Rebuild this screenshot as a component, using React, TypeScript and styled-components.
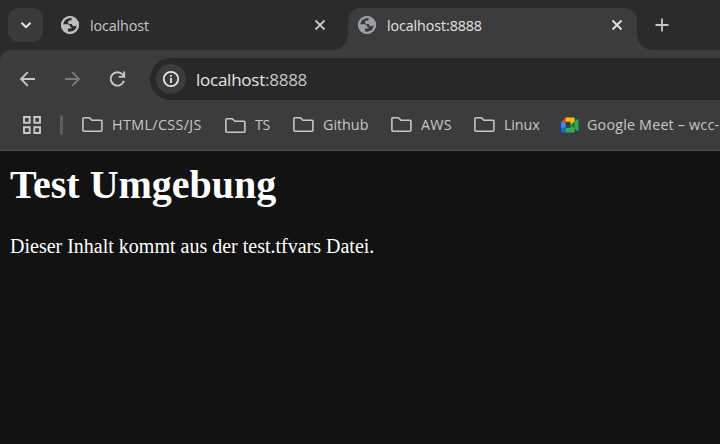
import React from "react";
import styled, { createGlobalStyle } from "styled-components";

const Global = createGlobalStyle`
  *, *::before, *::after { box-sizing: border-box; }
  html, body, #root { margin: 0; height: 100%; overflow: hidden; background: #121212; }
  svg { display: block; flex: none; }
`;

const Browser = styled.div`
  width: 720px;
  height: 444px;
  display: flex;
  flex-direction: column;
  overflow: hidden;
  background: #2b2b2b;
  font-family: "Open Sans", "Noto Sans", sans-serif;
`;

const TabStrip = styled.div`
  height: 50px;
  flex: none;
  display: flex;
  padding: 8px 0 0 8px;
`;

const TabSearch = styled.div`
  width: 35px;
  height: 34px;
  flex: none;
  border-radius: 11px;
  background: #3b3b3b;
  display: grid;
  place-items: center;
`;

const Tab = styled.div<{ $active?: boolean }>`
  position: relative;
  width: ${(p) => (p.$active ? 289 : 305)}px;
  height: 42px;
  flex: none;
  display: flex;
  align-items: center;
  padding: 0 ${(p) => (p.$active ? "7px 8px 10px" : "15px 8px 18px")};
  border-radius: 13px 13px 0 0;
  background: ${(p) => (p.$active ? "#3c3c3c" : "transparent")};
  color: ${(p) => (p.$active ? "#e3e3e3" : "#c7c7c7")};

  &::before, &::after {
    content: "";
    display: ${(p) => (p.$active ? "block" : "none")};
    position: absolute;
    bottom: 0;
    width: 15px;
    height: 15px;
  }
  &::before {
    left: -15px;
    background: radial-gradient(circle at 0 0, transparent 14.5px, #3c3c3c 15px);
  }
  &::after {
    right: -15px;
    background: radial-gradient(circle at 100% 0, transparent 14.5px, #3c3c3c 15px);
  }
`;

const TabTitle = styled.span`
  flex: 1;
  margin-left: 11px;
  padding-top: 2px;
  font-size: 14.3px;
  line-height: 20px;
  letter-spacing: -0.1px;
  white-space: nowrap;
`;

const NewTab = styled.div`
  margin: 10px 0 0 18px;
`;

const Toolbar = styled.div`
  height: 57px;
  flex: none;
  display: flex;
  align-items: center;
  padding-left: 17px;
  border-radius: 10px 0 0 0;
  background: #3c3c3c;
`;

const NavButton = styled.div<{ $dim?: boolean }>`
  width: 45px;
  color: ${(p) => (p.$dim ? "#7b7b7b" : "#c7c7c7")};
`;

const AddressBar = styled.div`
  flex: 1;
  height: 42px;
  margin-left: -2px;
  display: flex;
  align-items: center;
  padding-left: 6px;
  border-radius: 21px 0 0 21px;
  background: #282828;
  color: #e6e6e6;
`;

const SiteInfo = styled.div`
  width: 30px;
  height: 30px;
  border-radius: 50%;
  background: #3c3c3c;
  display: grid;
  place-items: center;
`;

const Url = styled.span`
  margin-left: 10px;
  padding-top: 2px;
  font-size: 17px;
  line-height: 24px;
  letter-spacing: -0.25px;
`;

const Port = styled.span`
  color: #c7c7c7;
`;

const Bookmarks = styled.div`
  height: 44px;
  flex: none;
  display: flex;
  align-items: center;
  padding: 0 0 7px 22px;
  border-bottom: 1px solid #4a4a4a;
  background: #3c3c3c;
  color: #c7c7c7;
`;

const Divider = styled.div`
  width: 3px;
  height: 20px;
  flex: none;
  margin: 0 19px 0 18px;
  border-radius: 2px;
  background: #5e5e5e;
`;

const Bookmark = styled.div<{ $width?: number }>`
  width: ${(p) => (p.$width ? `${p.$width}px` : "auto")};
  flex: none;
  display: flex;
  align-items: center;
`;

const BookmarkLabel = styled.span<{ $spacing: number; $gap?: number }>`
  margin-left: ${(p) => p.$gap ?? 9}px;
  font-size: 14.3px;
  line-height: 20px;
  letter-spacing: ${(p) => p.$spacing}px;
  white-space: nowrap;
`;

const Page = styled.main`
  flex: 1;
  padding: 11px 10px;
  background: #121212;
  color: #fff;
  font-family: "Liberation Serif", "Times New Roman", serif;
`;

const Heading = styled.h1`
  margin: 0;
  font-size: 40px;
  line-height: 46px;
  font-weight: 700;
`;

const Text = styled.p`
  margin: 27px 0 0;
  font-size: 20px;
  line-height: 23px;
`;

const Globe = ({ color, hole }: { color: string; hole: string }) => (
  <svg width="18" height="18" viewBox="0 0 18 18">
    <circle cx="9" cy="9" r="9" fill={color} />
    <path
      d="M11.300 2.300C7.400 1.400 2.900 3.700 2.100 8.300h4.300c1.900 0 2.700 1 2.700 2.600h1.200v1.600H6.900v3C11 16.800 15.600 13.700 15.900 9.300c-.7.700-1.500 1-2.500 1-1.600 0-2.300-.8-2.500-2.200H8.200c-1.400 0-1.600-2.900.2-3.500h2.100c-.2-1.200 0-1.800.8-2.300z"
      fill={hole}
    />
    <circle cx="9" cy="9" r="8" fill="none" stroke={color} strokeWidth="2" />
  </svg>
);

const Close = () => (
  <svg width="26" height="26" viewBox="0 0 26 26" fill="none" stroke="currentColor" strokeWidth="1.8">
    <path d="M8.500 8.500l9 9M17.500 8.500l-9 9" />
  </svg>
);

const Folder = ({ drop = 0 }: { drop?: number }) => (
  <svg width="21" height="20" viewBox={`0 ${-drop} 21 20`} fill="none" stroke="currentColor" strokeWidth="1.600" strokeLinejoin="round">
    <path d="M.9 15.200V3.600q0-.9.900-.9h5.600l2.500 2.600h9q1 0 1 1v8.900q0 1-1 1H1.900q-1 0-1-1z" />
  </svg>
);

const folders = [
  { name: "HTML/CSS/JS", width: 143, spacing: 0.38, drop: 0 },
  { name: "TS", width: 68, spacing: -0.4, drop: 1 },
  { name: "Github", width: 98, spacing: 0, drop: 0 },
  { name: "AWS", width: 83, spacing: 0.2, drop: 0 },
  { name: "Linux", width: 87, spacing: -0.1, drop: 0 },
];

export default function App() {
  return (
    <>
      <Global />
      <Browser>
        <TabStrip>
          <TabSearch>
            <svg width="12" height="12" viewBox="0 0 12 12" fill="none" stroke="#e6e6e6" strokeWidth="2">
              <path d="M1.500 3.800L6 8.200l4.500-4.400" />
            </svg>
          </TabSearch>
          <Tab>
            <Globe color="#bdbdbd" hole="#2b2b2b" />
            <TabTitle>localhost</TabTitle>
            <Close />
          </Tab>
          <Tab $active>
            <Globe color="#9aa0a6" hole="#3c3c3c" />
            <TabTitle>localhost:8888</TabTitle>
            <Close />
          </Tab>
          <NewTab>
            <svg width="14" height="14" viewBox="0 0 14 14" stroke="#c7c7c7" strokeWidth="1.800">
              <path d="M7 .5v13M.5 7h13" />
            </svg>
          </NewTab>
        </TabStrip>
        <Toolbar>
          <NavButton>
            <svg width="20" height="20" viewBox="0 0 20 20" fill="none" stroke="currentColor" strokeWidth="1.800">
              <path d="M18 10H4M10.800 3.200L4 10l6.800 6.800" />
            </svg>
          </NavButton>
          <NavButton $dim>
            <svg width="20" height="20" viewBox="0 0 20 20" fill="none" stroke="currentColor" strokeWidth="1.800">
              <path d="M3 10h14M10.200 3.200L17 10l-6.800 6.800" />
            </svg>
          </NavButton>
          <NavButton>
            <svg width="20" height="20" viewBox="0 0 20 20" fill="none" stroke="currentColor" strokeWidth="1.900">
              <path d="M16.900 11.700A6.700 6.700 0 1 1 15.600 5.600L17 7.500M17.200 2.500v5.400h-5.500" />
            </svg>
          </NavButton>
          <AddressBar>
            <SiteInfo>
              <svg width="18" height="18" viewBox="0 0 18 18" fill="none" stroke="#e6e6e6" strokeWidth="1.800">
                <circle cx="9" cy="9" r="7.200" />
                <path d="M9 8v5M9 5v1.800" />
              </svg>
            </SiteInfo>
            <Url>localhost<Port>:8888</Port></Url>
          </AddressBar>
        </Toolbar>
        <Bookmarks>
          <svg width="20" height="20" viewBox="0 0 20 20" fill="none" stroke="#c7c7c7" strokeWidth="1.900">
            <path d="M2 2h5.700v5.700H2zM12.300 2H18v5.700h-5.700zM2 12.300h5.700V18H2zM12.300 12.300H18V18h-5.700z" />
          </svg>
          <Divider />
          {folders.map((f) => (
            <Bookmark key={f.name} $width={f.width}>
              <Folder drop={f.drop} />
              <BookmarkLabel $spacing={f.spacing}>{f.name}</BookmarkLabel>
            </Bookmark>
          ))}
          <Bookmark>
            <svg width="18" height="16" viewBox="0 0 19 16">
              <path d="M5 0v5H0z" fill="#ea4335" />
              <path d="M0 5h5v6H0z" fill="#4285f4" />
              <path d="M0 11h5v5H1.500Q0 16 0 14.500z" fill="#1967d2" />
              <path d="M5 0h8q1.500 0 1.500 1.500V5L10 8V4.500H5z" fill="#fbbc04" />
              <path d="M5 11h5V8l4.500-3v9.500q0 1.500-1.500 1.500H5z" fill="#34a853" />
              <path d="M10 8l7-6q1.500-.8 1.500.7v10.600q0 1.500-1.500.7z" fill="#34a853" />
              <path d="M10 8l4.500-3.700v7.400z" fill="#188038" />
            </svg>
            <BookmarkLabel $spacing={0.2} $gap={8}>Google Meet – wcc-</BookmarkLabel>
          </Bookmark>
        </Bookmarks>
        <Page>
          <Heading>Test Umgebung</Heading>
          <Text>Dieser Inhalt kommt aus der test.tfvars Datei.</Text>
        </Page>
      </Browser>
    </>
  );
}
